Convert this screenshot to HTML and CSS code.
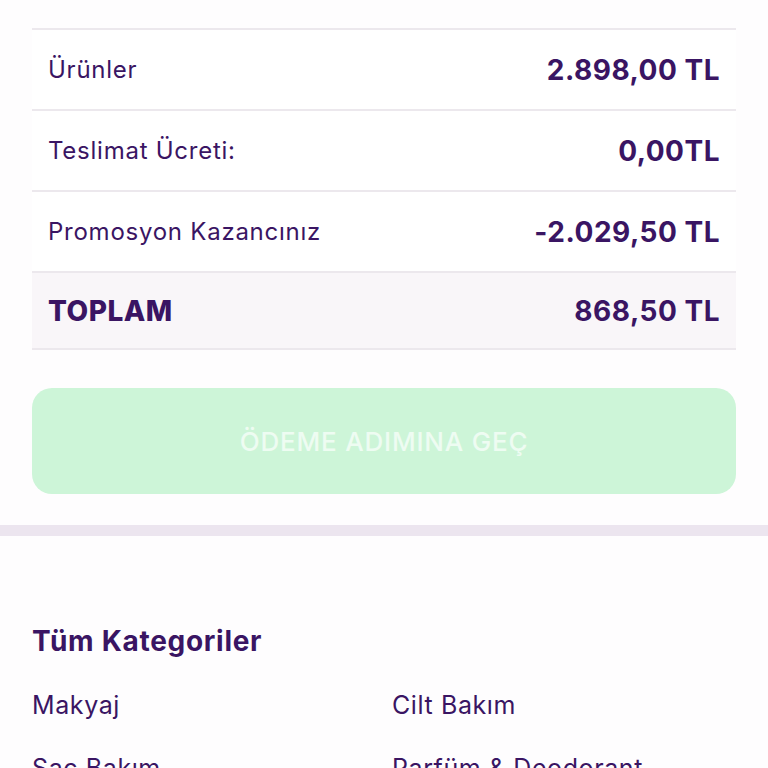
FILE: index.html
```html
<!DOCTYPE html>
<html lang="tr">
<head>
<meta charset="UTF-8" />
<meta name="viewport" content="width=device-width, initial-scale=1" />
<title>Sepetim</title>
<link rel="stylesheet" href="styles.css">
</head>
<body>

  <!-- Sepet ozeti -->
  <div class="summary">
    <div class="summary-row">
      <span class="label">Ürünler</span>
      <span class="value">2.898,00 TL</span>
    </div>
    <div class="summary-row">
      <span class="label">Teslimat Ücreti:</span>
      <span class="value">0,00TL</span>
    </div>
    <div class="summary-row">
      <span class="label">Promosyon Kazancınız</span>
      <span class="value">-2.029,50 TL</span>
    </div>
    <div class="summary-row total">
      <span class="label">TOPLAM</span>
      <span class="value">868,50 TL</span>
    </div>
  </div>

  <button class="pay-btn" disabled>ÖDEME ADIMINA GEÇ</button>

  <div class="divider"></div>

  <!-- Kategoriler -->
  <div class="categories">
    <h2>Tüm Kategoriler</h2>
    <div class="cat-grid">
      <a href="#">Makyaj</a>
      <a href="#">Cilt Bakım</a>
      <a href="#">Saç Bakım</a>
      <a href="#">Parfüm &amp; Deodorant</a>
    </div>
  </div>

</body>
</html>
```

FILE: styles.css
```css
* {
  box-sizing: border-box;
}

body, html {
  margin: 0;
  padding: 0;
  background: #fefdfe;
  color: #3a1563;
  font-family: Inter, "Noto Sans", sans-serif;
}

.summary {
  margin: 28px 32px 0;
  border-top: 2px solid #ece8ed;
}

.summary-row {
  display: flex;
  justify-content: space-between;
  align-items: center;
  height: 81px;
  padding: 0 16px;
  border-bottom: 2px solid #ece8ed;
  background: #fff;
}

.summary-row .label {
  font-size: 24px;
  letter-spacing: 0.75px;
}

.summary-row .value {
  font-size: 28px;
  font-weight: 700;
  letter-spacing: 0.5px;
}

.summary-row.total {
  height: 77px;
  background: #f9f6f9;
}

.summary-row.total .label {
  font-size: 28px;
  font-weight: 800;
  letter-spacing: 0.5px;
}

.pay-btn {
  display: block;
  width: calc(100% - 64px);
  height: 106px;
  margin: 38px 32px 0;
  border: none;
  border-radius: 20px;
  background: #cdf5d8;
  color: #eefcf2;
  font-family: inherit;
  font-size: 26px;
  font-weight: 500;
  letter-spacing: 0.8px;
}

.divider {
  height: 11px;
  margin-top: 31px;
  background: #ece5ef;
}

.categories {
  padding: 88px 32px 0;
}

.categories h2 {
  margin: 0 0 32px;
  font-size: 28px;
  font-weight: 700;
  letter-spacing: 0.7px;
}

.cat-grid {
  display: grid;
  grid-template-columns: 1fr 1fr;
  column-gap: 16px;
  row-gap: 33px;
}

.cat-grid a {
  color: inherit;
  text-decoration: none;
  font-size: 25px;
  letter-spacing: 0.6px;
}
```
